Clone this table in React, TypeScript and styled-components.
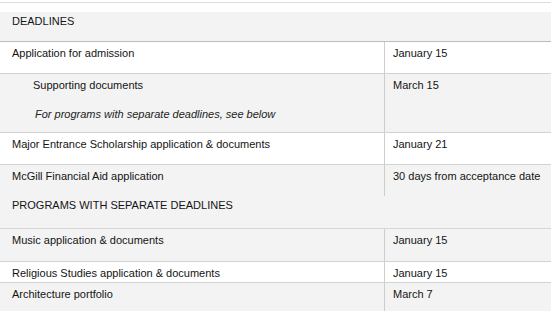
import React from "react";
import styled, { createGlobalStyle } from "styled-components";

const GlobalStyle = createGlobalStyle`
  html, body {
    margin: 0;
    padding: 0;
    background: #fff;
  }
  body {
    font-family: "Liberation Sans", Arial, sans-serif;
    font-size: 11px;
    color: #141414;
  }
`;

const Page = styled.div`
  width: 551px;
  padding-top: 2px;
`;

const TopRule = styled.hr`
  margin: 0 0 9px;
  border: 0;
  border-top: 1px solid #dedede;
`;

const Table = styled.div`
  display: flex;
  flex-direction: column;
`;

const SectionHead = styled.div<{ $tall?: boolean }>`
  background: #f3f3f3;
  padding: ${(p) => (p.$tall ? "2px 12px 15px" : "2px 12px 12px")};
  line-height: 15px;
  text-transform: uppercase;
  border-bottom: 1px solid ${(p) => (p.$tall ? "#d6d6d6" : "#bdbdbd")};
`;

const Row = styled.div<{ $shaded?: boolean; $last?: boolean }>`
  display: grid;
  grid-template-columns: 384px 1fr;
  background: ${(p) => (p.$shaded ? "#f3f3f3" : "#fff")};
  border-bottom: ${(p) => (p.$last ? "0" : "1px solid #d2d2d2")};
`;

const Cell = styled.div<{ $pad?: number }>`
  padding: 4px 12px ${(p) => p.$pad ?? 12}px;
  display: flex;
  flex-direction: column;
  gap: 14px;
  line-height: 15px;
`;

const DateCell = styled(Cell)`
  border-left: 1px solid #cdcdcd;
  padding-left: 8px;
  padding-right: 4px;
`;

const Indented = styled.span`
  padding-left: 21px;
`;

const Note = styled.em`
  padding-left: 23px;
  font-style: italic;
  color: #222;
`;

export default function App() {
  return (
    <Page>
      <GlobalStyle />
      <TopRule />
      <Table>
        <SectionHead>Deadlines</SectionHead>
        <Row>
          <Cell>Application for admission</Cell>
          <DateCell>January 15</DateCell>
        </Row>
        <Row $shaded>
          <Cell $pad={10}>
            <Indented>Supporting documents</Indented>
            <Note>For programs with separate deadlines, see below</Note>
          </Cell>
          <DateCell $pad={10}>March 15</DateCell>
        </Row>
        <Row>
          <Cell>Major Entrance Scholarship application &amp; documents</Cell>
          <DateCell>January 21</DateCell>
        </Row>
        <Row $shaded $last>
          <Cell>McGill Financial Aid application</Cell>
          <DateCell>30 days from acceptance date</DateCell>
        </Row>
        <SectionHead $tall>Programs with separate deadlines</SectionHead>
        <Row $shaded>
          <Cell $pad={13}>Music application &amp; documents</Cell>
          <DateCell $pad={13}>January 15</DateCell>
        </Row>
        <Row>
          <Cell $pad={1}>Religious Studies application &amp; documents</Cell>
          <DateCell $pad={1}>January 15</DateCell>
        </Row>
        <Row $shaded $last>
          <Cell $pad={9}>Architecture portfolio</Cell>
          <DateCell $pad={9}>March 7</DateCell>
        </Row>
      </Table>
    </Page>
  );
}
